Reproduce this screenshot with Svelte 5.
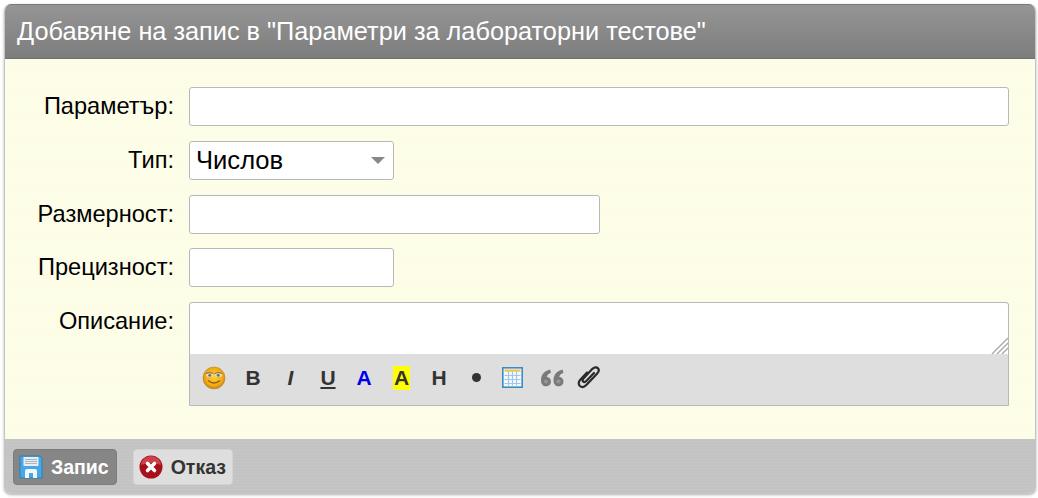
<script>
	const fields = [
		{ label: 'Параметър:', size: 'full' },
		{ label: 'Тип:', size: 'select', value: 'Числов' },
		{ label: 'Размерност:', size: 'medium' },
		{ label: 'Прецизност:', size: 'small' }
	];
</script>

<div class="page">
	<div class="dialog">
		<div class="title">Добавяне на запис в "Параметри за лабораторни тестове"</div>

		<div class="form">
			{#each fields as field}
				<div class="label">{field.label}</div>
				<div class="field">
					{#if field.size === 'select'}
						<div class="input select">
							<span>{field.value}</span>
							<i class="caret"></i>
						</div>
					{:else}
						<div class="input {field.size}"></div>
					{/if}
				</div>
			{/each}

			<div class="label">Описание:</div>
			<div class="editor">
				<div class="area">
					<svg class="grip" width="17" height="17" viewBox="0 0 17 17">
						<path d="M17 1 1 17M17 6 6 17M17 11 11 17" stroke="#a8a8a8" stroke-width="1.4" fill="none" />
					</svg>
				</div>
				<div class="toolbar">
					<span class="tool">
						<svg width="24" height="24" viewBox="0 0 24 24">
							<defs>
								<radialGradient id="face" cx="50%" cy="45%" r="60%">
									<stop offset="0" stop-color="#fdd02c" />
									<stop offset="0.65" stop-color="#f0ab1a" />
									<stop offset="1" stop-color="#b8760e" />
								</radialGradient>
							</defs>
							<circle cx="12" cy="12" r="11" fill="url(#face)" stroke="#c08a20" stroke-width="0.6" />
							<ellipse cx="7.600" cy="8.800" rx="3.600" ry="2.300" fill="#e4e2d6" />
							<ellipse cx="16.400" cy="8.800" rx="3.600" ry="2.300" fill="#e4e2d6" />
							<circle cx="7.800" cy="9.200" r="1.500" fill="#6f6f78" />
							<circle cx="16.200" cy="9.200" r="1.500" fill="#6f6f78" />
							<path d="M3.800 7.800Q7.600 5.400 11.400 7.800M12.600 7.800Q16.400 5.400 20.200 7.800" stroke="#a8781c" stroke-width="1.200" fill="none" />
							<path d="M6 14.500q6 5 12 0" stroke="#96600a" stroke-width="1.300" fill="none" />
						</svg>
					</span>
					<span class="tool nudge">B</span>
					<span class="tool nudge i">I</span>
					<span class="tool nudge u">U</span>
					<span class="tool blue">A</span>
					<span class="tool yellow"><em>A</em></span>
					<span class="tool h">H</span>
					<span class="tool dot"><i></i></span>
					<span class="tool table">
						<svg width="21" height="21" viewBox="0 0 21 21">
							<rect x="0.800" y="0.800" width="19.400" height="19.400" fill="#f4f9fd" stroke="#3b8cc0" stroke-width="1.600" />
							<rect x="2.500" y="2.500" width="16" height="2.200" fill="#f8c04a" />
							<path d="M2.500 8.500h16M2.500 12.500h16M2.500 16.500h16M6.500 4.500v14M10.500 4.500v14M14.500 4.500v14" stroke="#a4c6e6" stroke-width="1.200" fill="none" />
						</svg>
					</span>
					<span class="tool">
						<svg width="24" height="20" viewBox="0 0 24 20">
							<path d="M10 1.500C4.500 3 1 6.500 1 12.500c0 3.600 2.200 5.800 5 5.800s5-2.100 5-4.800-2-4.500-4.300-4.500C7.300 7 8.800 5.500 11 4.800ZM22.500 1.500C17 3 13.500 6.500 13.500 12.500c0 3.600 2.200 5.800 5 5.800s5-2.100 5-4.800-2-4.500-4.300-4.500C19.800 7 21.300 5.500 23.500 4.800Z" fill="#7a7a7a" />
							<circle cx="6" cy="13.500" r="2" fill="#969696" />
							<circle cx="18.500" cy="13.500" r="2" fill="#969696" />
						</svg>
					</span>
					<span class="tool">
						<svg width="24" height="24" viewBox="0 0 24 24">
							<path d="M10 6.500 3.500 13.500c-2.300 2.400-2.200 5-.6 6.500 1.700 1.500 4.200 1.400 6.400-.9L20 7.800c2.200-2.400 2.100-4.500.8-5.700-1.300-1.300-3.600-1.100-5.600 1L6.500 12.500c-1.100 1.200-1 2.400-.3 3.100.8.700 2 .5 3.100-.6l7.700-8" stroke="#2a2a2a" stroke-width="2.200" fill="none" stroke-linecap="round" />
						</svg>
					</span>
				</div>
			</div>
		</div>

		<div class="footer">
			<button class="btn primary">
				<svg width="24" height="24" viewBox="0 0 24 24">
					<path d="M1 1h20l2 2v20H1Z" fill="#46a8e6" stroke="#2c7fb8" />
					<rect x="4.500" y="2" width="15" height="9" fill="#e8eef2" />
					<path d="M6 4.500h12M6 6.500h12M6 8.500h12" stroke="#a8b4bc" />
					<path d="M6 23v-7q0-2 2-2h8q2 0 2 2v7h-4v-5h-4v5Z" fill="#f4f7f9" />
				</svg>
				Запис
			</button>
			<button class="btn">
				<svg width="24" height="24" viewBox="0 0 24 24">
					<circle cx="12" cy="12" r="11.500" fill="#a5101a" />
					<path d="M2 10a10 9 0 0 1 20 0q-10-4-20 0Z" fill="#c8444a" />
					<path d="M8.500 8.500l7 7M15.500 8.500l-7 7" stroke="#fff" stroke-width="3.600" stroke-linecap="round" />
				</svg>
				Отказ
			</button>
		</div>
	</div>
</div>

<style>
	:global(body) {
		margin: 0;
		background: #fff;
	}

	.page {
		padding: 4px 2px 4px 4px;
		font-family: 'Liberation Sans', Arial, sans-serif;
	}

	.dialog {
		height: 490px;
		box-sizing: border-box;
		display: flex;
		flex-direction: column;
		border: 1px solid #c4c4c4;
		border-top: none;
		border-radius: 7px;
		overflow: hidden;
		box-shadow: 0 1px 3px rgba(0, 0, 0, 0.3);
		background-color: #fdfde6;
		background-image: repeating-linear-gradient(0deg, rgba(255, 255, 255, 0.25) 0 1px, transparent 1px 3px);
	}

	.title {
		height: 55px;
		box-sizing: border-box;
		flex-shrink: 0;
		padding: 10px 12px 0;
		font-size: 25.3px;
		line-height: 32px;
		color: #fff;
		white-space: nowrap;
		background: linear-gradient(#959595, #7d7d7d);
		border-top: 1px solid #777;
		border-bottom: 1px solid #707070;
	}

	.form {
		flex: 1;
		display: grid;
		grid-template-columns: 169px 820px;
		column-gap: 15px;
		row-gap: 14.75px;
		grid-auto-rows: 39px;
		padding-top: 28px;
		align-content: start;
	}

	.label {
		text-align: right;
		font-size: 23.6px;
		line-height: 38px;
		color: #000;
		white-space: nowrap;
	}

	.input {
		height: 39px;
		box-sizing: border-box;
		background: #fff;
		border: 1px solid #b8b8b8;
		border-radius: 3px;
	}

	.medium {
		width: 411px;
	}

	.small,
	.select {
		width: 205px;
	}

	.select {
		display: flex;
		align-items: center;
		justify-content: space-between;
		padding: 0 8px 0 6px;
		font-size: 25.6px;
		color: #000;
	}

	.caret {
		width: 0;
		height: 0;
		border: 7px solid transparent;
		border-top: 7px solid #888;
		border-bottom: 0;
	}

	.editor {
		height: 104px;
		box-sizing: border-box;
		border: 1px solid #b8b8b8;
		border-radius: 3px 3px 0 0;
		display: flex;
		flex-direction: column;
		background: #dedede;
	}

	.area {
		height: 51px;
		background: #fff;
		display: flex;
		justify-content: flex-end;
		align-items: flex-end;
		border-radius: 3px 3px 0 0;
	}

	.grip {
		display: block;
	}

	.toolbar {
		flex: 1;
		display: flex;
		align-items: center;
		padding: 0 0 4px 12px;
		gap: 13.5px;
	}

	.tool {
		width: 24px;
		height: 24px;
		box-sizing: border-box;
		display: flex;
		align-items: center;
		justify-content: center;
		font-size: 21px;
		font-weight: bold;
		color: #333;
	}

	.nudge {
		padding-left: 3px;
	}

	.table {
		padding-right: 3px;
	}

	.i {
		font-style: italic;
	}

	.u {
		text-decoration: underline;
	}

	.blue {
		color: #0000ee;
	}

	.yellow em {
		font-style: normal;
		background: #ffff00;
		padding: 0 1px;
		line-height: 24px;
	}

	.dot i {
		width: 9px;
		height: 9px;
		border-radius: 50%;
		background: #333;
	}

	.footer {
		height: 54px;
		box-sizing: border-box;
		flex-shrink: 0;
		display: flex;
		align-items: center;
		gap: 16px;
		padding: 2px 8px 0;
		background: repeating-linear-gradient(0deg, #c6c6c6 0 1px, #c3c3c3 1px 3px);
	}

	.btn {
		height: 36px;
		box-sizing: border-box;
		display: flex;
		align-items: center;
		gap: 8px;
		padding: 0 6px 0 5px;
		font-family: inherit;
		font-size: 19.5px;
		font-weight: bold;
		color: #333;
		background: #dedede;
		border: 1px solid #d4d4d4;
		border-radius: 4px;
	}

	.primary {
		padding-right: 7px;
		color: #fff;
		background: #868686;
		border-color: #7c7c7c;
	}
</style>
